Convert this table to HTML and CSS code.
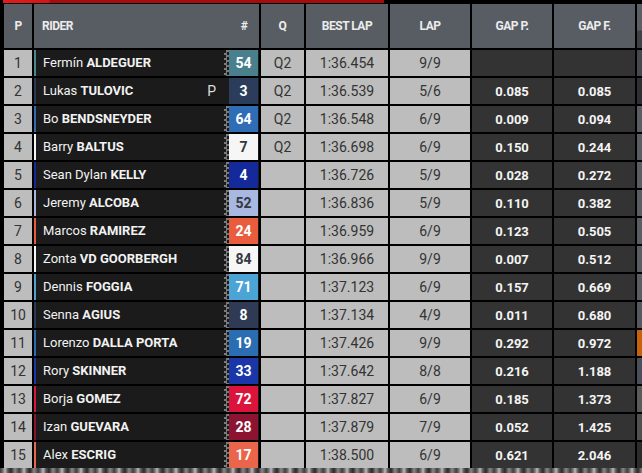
FILE: index.html
```html
<!DOCTYPE html>
<html>
<head>
<meta charset="utf-8">
<link rel="stylesheet" href="styles.css">
</head>
<body>
<div class="topbar"></div>
<div class="board">
  <div class="hd c">P</div>
  <div class="hd rider-h"><span>RIDER</span><span class="hash">#</span></div>
  <div class="hd c">Q</div>
  <div class="hd c">BEST LAP</div>
  <div class="hd c">LAP</div>
  <div class="hd c">GAP P.</div>
  <div class="hd c">GAP F.</div>
  <div class="hd extra-h"></div>

  <div class="pos">1</div>
  <div class="rider" style="--c:#4b8790"><span class="name">Fermín <b>ALDEGUER</b></span><span class="chk"></span><span class="num" style="--nc:#4a7f8e">54</span></div>
  <div class="lt">Q2</div><div class="lt">1:36.454</div><div class="lt">9/9</div><div class="gap"></div><div class="gap"></div><div class="ex" style="--x:#45484c"></div>

  <div class="pos">2</div>
  <div class="rider" style="--c:#2c3a56"><span class="name">Lukas <b>TULOVIC</b></span><span class="pit">P</span><span class="nochk"></span><span class="num" style="--nc:#2c3d5c">3</span></div>
  <div class="lt">Q2</div><div class="lt">1:36.539</div><div class="lt">5/6</div><div class="gap">0.085</div><div class="gap">0.085</div><div class="ex" style="--x:#2e3034"></div>

  <div class="pos">3</div>
  <div class="rider" style="--c:#2f6cb4"><span class="name">Bo <b>BENDSNEYDER</b></span><span class="chk"></span><span class="num" style="--nc:#2f6db6">64</span></div>
  <div class="lt">Q2</div><div class="lt">1:36.548</div><div class="lt">6/9</div><div class="gap">0.009</div><div class="gap">0.094</div><div class="ex" style="--x:#5a5d62"></div>

  <div class="pos">4</div>
  <div class="rider" style="--c:#f4f4f4"><span class="name">Barry <b>BALTUS</b></span><span class="chk"></span><span class="num dark" style="--nc:#f6f6f6">7</span></div>
  <div class="lt">Q2</div><div class="lt">1:36.698</div><div class="lt">6/9</div><div class="gap">0.150</div><div class="gap">0.244</div><div class="ex" style="--x:#5a5d62"></div>

  <div class="pos">5</div>
  <div class="rider" style="--c:#152a96"><span class="name">Sean Dylan <b>KELLY</b></span><span class="chk"></span><span class="num" style="--nc:#14299a">4</span></div>
  <div class="lt"></div><div class="lt">1:36.726</div><div class="lt">5/9</div><div class="gap">0.028</div><div class="gap">0.272</div><div class="ex" style="--x:#5a5d62"></div>

  <div class="pos">6</div>
  <div class="rider" style="--c:#a8b6de"><span class="name">Jeremy <b>ALCOBA</b></span><span class="chk"></span><span class="num dark" style="--nc:#a9b8e0">52</span></div>
  <div class="lt"></div><div class="lt">1:36.836</div><div class="lt">5/9</div><div class="gap">0.110</div><div class="gap">0.382</div><div class="ex" style="--x:#5a5d62"></div>

  <div class="pos">7</div>
  <div class="rider" style="--c:#e85c3e"><span class="name">Marcos <b>RAMIREZ</b></span><span class="chk"></span><span class="num" style="--nc:#ea5c3e">24</span></div>
  <div class="lt"></div><div class="lt">1:36.959</div><div class="lt">6/9</div><div class="gap">0.123</div><div class="gap">0.505</div><div class="ex" style="--x:#5a5d62"></div>

  <div class="pos">8</div>
  <div class="rider" style="--c:#f6f6f6"><span class="name">Zonta <b>VD GOORBERGH</b></span><span class="chk"></span><span class="num dark" style="--nc:#f6f6f6">84</span></div>
  <div class="lt"></div><div class="lt">1:36.966</div><div class="lt">9/9</div><div class="gap">0.007</div><div class="gap">0.512</div><div class="ex" style="--x:#5a5d62"></div>

  <div class="pos">9</div>
  <div class="rider" style="--c:#4ea2d2"><span class="name">Dennis <b>FOGGIA</b></span><span class="chk"></span><span class="num" style="--nc:#4ca3d6">71</span></div>
  <div class="lt"></div><div class="lt">1:37.123</div><div class="lt">6/9</div><div class="gap">0.157</div><div class="gap">0.669</div><div class="ex" style="--x:#5a5d62"></div>

  <div class="pos">10</div>
  <div class="rider" style="--c:#2e3a52"><span class="name">Senna <b>AGIUS</b></span><span class="chk"></span><span class="num" style="--nc:#2f3b55">8</span></div>
  <div class="lt"></div><div class="lt">1:37.134</div><div class="lt">4/9</div><div class="gap">0.011</div><div class="gap">0.680</div><div class="ex" style="--x:#55585c"></div>

  <div class="pos">11</div>
  <div class="rider" style="--c:#2a6cb0"><span class="name">Lorenzo <b>DALLA PORTA</b></span><span class="chk"></span><span class="num" style="--nc:#2b6db3">19</span></div>
  <div class="lt"></div><div class="lt">1:37.426</div><div class="lt">9/9</div><div class="gap">0.292</div><div class="gap">0.972</div><div class="ex" style="--x:#c4620e"></div>

  <div class="pos">12</div>
  <div class="rider" style="--c:#1a38a6"><span class="name">Rory <b>SKINNER</b></span><span class="chk"></span><span class="num" style="--nc:#1a36a8">33</span></div>
  <div class="lt"></div><div class="lt">1:37.642</div><div class="lt">8/8</div><div class="gap">0.216</div><div class="gap">1.188</div><div class="ex" style="--x:#4a4f5c"></div>

  <div class="pos">13</div>
  <div class="rider" style="--c:#d8163c"><span class="name">Borja <b>GOMEZ</b></span><span class="chk"></span><span class="num" style="--nc:#dc143c">72</span></div>
  <div class="lt"></div><div class="lt">1:37.827</div><div class="lt">6/9</div><div class="gap">0.185</div><div class="gap">1.373</div><div class="ex" style="--x:#5a5a5a"></div>

  <div class="pos">14</div>
  <div class="rider" style="--c:#8a1530"><span class="name">Izan <b>GUEVARA</b></span><span class="chk"></span><span class="num" style="--nc:#8c1430">28</span></div>
  <div class="lt"></div><div class="lt">1:37.879</div><div class="lt">7/9</div><div class="gap">0.052</div><div class="gap">1.425</div><div class="ex" style="--x:#505050"></div>

  <div class="pos">15</div>
  <div class="rider" style="--c:#e8664a"><span class="name">Alex <b>ESCRIG</b></span><span class="chk"></span><span class="num" style="--nc:#ea654a">17</span></div>
  <div class="lt"></div><div class="lt">1:38.500</div><div class="lt">6/9</div><div class="gap">0.621</div><div class="gap">2.046</div><div class="ex" style="--x:#2c2c2c"></div>
</div>
<div class="photo"></div>
</body>
</html>
```
FILE: styles.css
```css
html, body {
  margin: 0;
  padding: 0;
}
body {
  background: #000;
  width: 642px;
  height: 473px;
  overflow: hidden;
  font-family: Roboto, "Liberation Sans", sans-serif;
}
.topbar {
  margin-left: 3px;
  width: 381px;
  height: 3px;
  background: linear-gradient(90deg, #e01c1c 0, #d41616 46px, #a80d0d 47px, #a40c0c 100%);
}
.board {
  margin: 1px 0 0 4px;
  display: grid;
  grid-template-columns: 28px 225px 43px 82px 80px 80px 81px 20px;
  grid-template-rows: 44px repeat(15, 26px);
  column-gap: 2px;
  row-gap: 2px;
}
.hd {
  background: #585d64;
  color: #ececec;
  font-size: 12px;
  font-weight: 700;
  letter-spacing: -0.5px;
  display: flex;
  align-items: center;
}
.hd.c {
  justify-content: center;
}
.rider-h {
  justify-content: space-between;
  padding-left: 8px;
}
.rider-h .hash {
  width: 30px;
  text-align: center;
}
.extra-h {
  background: linear-gradient(180deg, #5a5f66 0, #5a5f66 26px, #3e4146 27px);
}
.pos {
  background: #bdbdbd;
  color: #333;
  font-size: 14px;
  display: flex;
  align-items: center;
  justify-content: center;
}
.rider {
  background: #1b1b1b;
  border-left: 2px solid var(--c);
  display: flex;
  align-items: stretch;
  color: #f2f2f2;
}
.name {
  flex: 1;
  display: block;
  line-height: 26px;
  padding-left: 7px;
  font-size: 13px;
  white-space: nowrap;
}
.name b {
  font-weight: 700;
}
.pit {
  display: flex;
  align-items: center;
  font-size: 14px;
  color: #ddd;
  margin-right: 8px;
}
.chk, .nochk {
  width: 5px;
  flex: none;
}
.chk {
  background: conic-gradient(#7a7a7a 25%, transparent 0 50%, #7a7a7a 0 75%, transparent 0) 0 0 / 5px 5px;
}
.num {
  width: 29px;
  flex: none;
  background: var(--nc);
  color: #fff;
  font-weight: 700;
  font-size: 14px;
  display: flex;
  align-items: center;
  justify-content: center;
  margin-right: 1px;
}
.num.dark {
  color: #333842;
}
.lt {
  background: #bdbdbd;
  color: #333;
  font-size: 14px;
  display: flex;
  align-items: center;
  justify-content: center;
}
.gap {
  background: #333333;
  color: #f4f4f4;
  font-size: 13px;
  font-weight: 700;
  display: flex;
  align-items: center;
  justify-content: center;
}
.ex {
  background: var(--x);
}
.photo {
  height: 8px;
  background: repeating-linear-gradient(90deg, #3a3a3a 0, #777 3px, #bbb 5px, #555 8px, #2a2a2a 11px, #888 15px, #444 19px);
}
```
